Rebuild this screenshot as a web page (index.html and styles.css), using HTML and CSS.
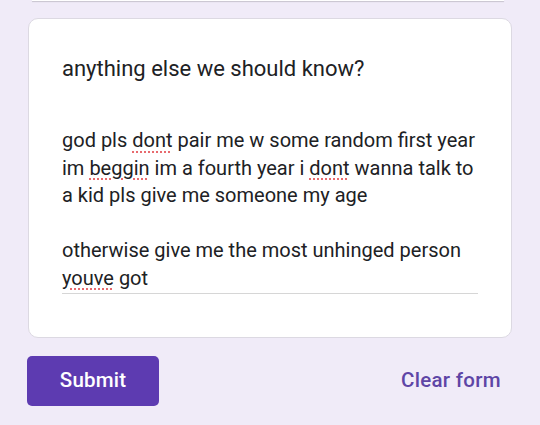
FILE: index.html
```html
<!DOCTYPE html>
<html>
<head>
<meta charset="utf-8">
<link rel="stylesheet" href="styles.css">
</head>
<body>
<div class="page">
  <div class="prev-card"></div>
  <div class="card">
    <div class="question">anything else we should know?</div>
    <div class="answer">god pls <span class="sp">dont</span> pair me w some random first year<br>im <span class="sp">beggin</span> im a fourth year i <span class="sp">dont</span> wanna talk to<br>a kid pls give me someone my age<br><br>otherwise give me the most unhinged person<br><span class="sp">youve</span> got</div>
  </div>
  <div class="actions">
    <button class="submit">Submit</button>
    <button class="clear">Clear form</button>
  </div>
</div>
</body>
</html>
```
FILE: styles.css
```css
html, body {
  margin: 0;
  padding: 0;
  background: #f0ebf8;
  font-family: Roboto, "Noto Sans", sans-serif;
  color: #202124;
}
.page {
  width: 540px;
  height: 425px;
  overflow: hidden;
  display: flex;
  flex-direction: column;
}
.prev-card {
  height: 1px;
  margin: 0 36px 0 32px;
  background: #ffffff;
  box-shadow: 0 1px 1px rgba(60, 64, 67, 0.25);
}
.card {
  margin: 17px 28px 0 28px;
  background: #ffffff;
  border-radius: 10px;
  border: 1px solid #dcd9e2;
  padding: 35px 33px 43px 33px;
}
.question {
  font-size: 22px;
  line-height: 30px;
  margin-bottom: 43px;
}
.answer {
  font-size: 20px;
  line-height: 27.5px;
  white-space: nowrap;
  padding-bottom: 1px;
  border-bottom: 1px solid #d6d6d6;
}
.sp {
  text-decoration-line: underline;
  text-decoration-style: dotted;
  text-decoration-color: #e86a6e;
  text-decoration-thickness: 1.5px;
  text-underline-offset: 4px;
}
.actions {
  display: flex;
  justify-content: space-between;
  align-items: center;
  margin: 18px 39px 0 27px;
}
.submit {
  width: 132px;
  height: 50px;
  border: none;
  border-radius: 5px;
  background: #5d3bb1;
  color: #ffffff;
  font-family: Roboto, sans-serif;
  font-weight: 500;
  font-size: 20.5px;
  letter-spacing: 0.2px;
  padding: 0 0 3px 0;
}
.clear {
  border: none;
  background: transparent;
  color: #5e45a6;
  font-family: Roboto, sans-serif;
  font-weight: 500;
  font-size: 20.5px;
  letter-spacing: 0.3px;
  padding: 0 0 3px 0;
}
```
